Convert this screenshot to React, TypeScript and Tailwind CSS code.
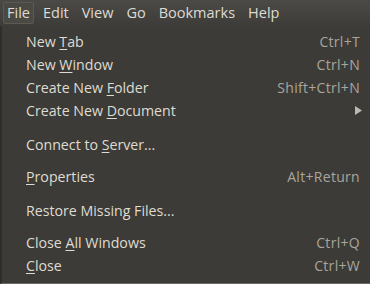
const menus = ["File", "Edit", "View", "Go", "Bookmarks", "Help"];

type Item =
  | { sep: true; h: number }
  | { sep?: false; pre: string; key: string; post: string; shortcut?: string; sub?: boolean };

const items: Item[] = [
  { pre: "New ", key: "T", post: "ab", shortcut: "Ctrl+T" },
  { pre: "New ", key: "W", post: "indow", shortcut: "Ctrl+N" },
  { pre: "Create New ", key: "F", post: "older", shortcut: "Shift+Ctrl+N" },
  { pre: "Create New ", key: "D", post: "ocument", sub: true },
  { sep: true, h: 11 },
  { pre: "Connect to ", key: "S", post: "erver..." },
  { sep: true, h: 9 },
  { pre: "", key: "P", post: "roperties", shortcut: "Alt+Return" },
  { sep: true, h: 11 },
  { pre: "Restore Missing Files...", key: "", post: "" },
  { sep: true, h: 9 },
  { pre: "Close ", key: "A", post: "ll Windows", shortcut: "Ctrl+Q" },
  { pre: "", key: "C", post: "lose", shortcut: "Ctrl+W" },
];

export default function App() {
  return (
    <div
      className="w-[370px] h-[284px] bg-[#3c3b37] text-[#dfdbd2] overflow-hidden flex flex-col"
      style={{ fontFamily: '"Open Sans", "Noto Sans", sans-serif' }}
    >
      <div className="h-[26px] flex items-center pl-[3px] bg-gradient-to-b from-[#4b4a46] to-[#3d3c38] text-[14.5px]">
        {menus.map((m, i) => (
          <div
            key={m}
            className={`h-[22px] flex items-center px-[3px] mr-[5px] rounded-[2px] ${
              i === 0 ? "bg-[#4a4944] border border-[#5a5954]" : "border border-transparent"
            }`}
          >
            {m}
          </div>
        ))}
      </div>
      <div className="flex-1 flex flex-col pt-[4px] border-l-2 border-[#2e2d2a] border-b border-b-[#6a6964] text-[14.2px]">
        {items.map((it, i) =>
          it.sep ? (
            <div key={i} style={{ height: it.h }} />
          ) : (
            <div key={i} className="h-[23px] flex items-center pl-[24px] pr-[10px]">
              <span className="flex-1">
                {it.pre}
                {it.key && <span className="underline underline-offset-2">{it.key}</span>}
                {it.post}
              </span>
              {it.shortcut && (
                <span className="text-[#a9a59d] text-[14px] tracking-[0.3px]">{it.shortcut}</span>
              )}
              {it.sub && (
                <svg width="7" height="9" viewBox="0 0 7 9" className="-mr-[2px]">
                  <path d="M0 0 L7 4.5 L0 9 Z" fill="#bdb9b0" />
                </svg>
              )}
            </div>
          )
        )}
      </div>
    </div>
  );
}
